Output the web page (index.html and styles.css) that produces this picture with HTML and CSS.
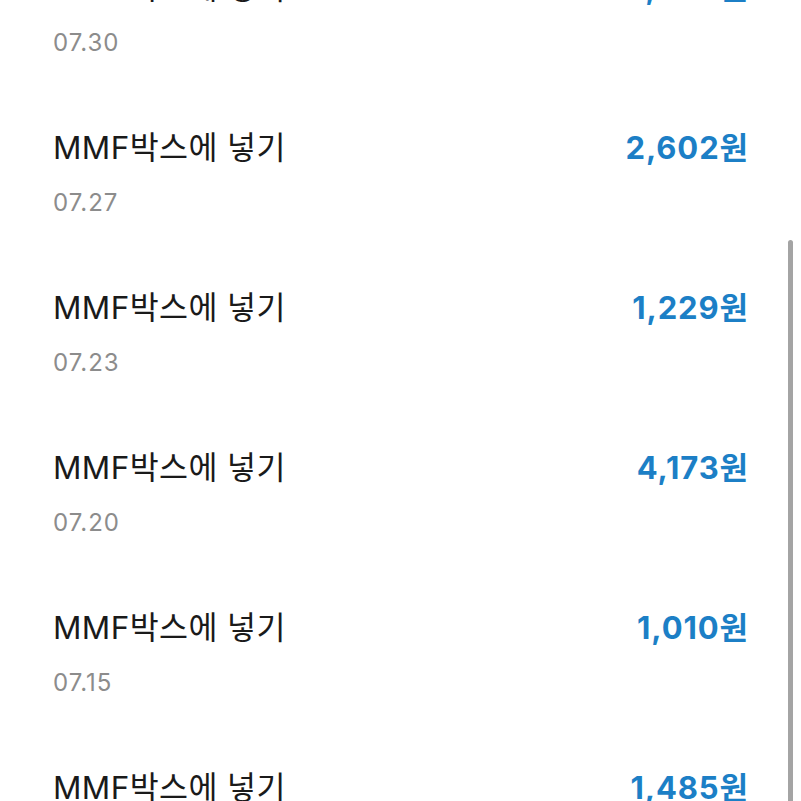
FILE: index.html
```html
<!DOCTYPE html>
<html lang="ko">
<head>
<meta charset="utf-8">
<link rel="stylesheet" href="styles.css">
</head>
<body>
<div class="viewport">
  <ul class="list">
    <li class="item"><div class="row"><span class="title">MMF박스에 넣기</span><span class="amount">1,360원</span></div><div class="date">07.30</div></li>
    <li class="item"><div class="row"><span class="title">MMF박스에 넣기</span><span class="amount">2,602원</span></div><div class="date">07.27</div></li>
    <li class="item"><div class="row"><span class="title">MMF박스에 넣기</span><span class="amount">1,229원</span></div><div class="date">07.23</div></li>
    <li class="item"><div class="row"><span class="title">MMF박스에 넣기</span><span class="amount">4,173원</span></div><div class="date">07.20</div></li>
    <li class="item"><div class="row"><span class="title">MMF박스에 넣기</span><span class="amount">1,010원</span></div><div class="date">07.15</div></li>
    <li class="item"><div class="row"><span class="title">MMF박스에 넣기</span><span class="amount">1,485원</span></div><div class="date">07.12</div></li>
  </ul>
  <div class="scrollbar"></div>
</div>
</body>
</html>
```
FILE: styles.css
```css
html, body {
  margin: 0;
  padding: 0;
  background: #ffffff;
}
body {
  font-family: Inter, "Noto Sans CJK KR", sans-serif;
}
.viewport {
  position: relative;
  width: 801px;
  height: 801px;
  overflow: hidden;
}
.list {
  list-style: none;
  margin: -32px 0 0 0;
  padding: 0 53px;
}
.item {
  height: 160px;
  display: flex;
  flex-direction: column;
  gap: 19px;
}
.row {
  display: flex;
  justify-content: space-between;
  align-items: baseline;
}
.title {
  font-size: 31.5px;
  line-height: 40px;
  letter-spacing: 0.4px;
  color: #1a1a1a;
}
.amount {
  font-size: 31px;
  line-height: 40px;
  font-weight: 700;
  letter-spacing: 0.9px;
  margin-right: -1px;
  color: #1c7fc6;
}
.date {
  font-size: 24px;
  line-height: 32px;
  letter-spacing: 1px;
  color: #8c8c8c;
}
.scrollbar {
  position: absolute;
  left: 788px;
  top: 240px;
  width: 5px;
  height: 580px;
  border-radius: 3px;
  background: #a4a4a4;
}
```
